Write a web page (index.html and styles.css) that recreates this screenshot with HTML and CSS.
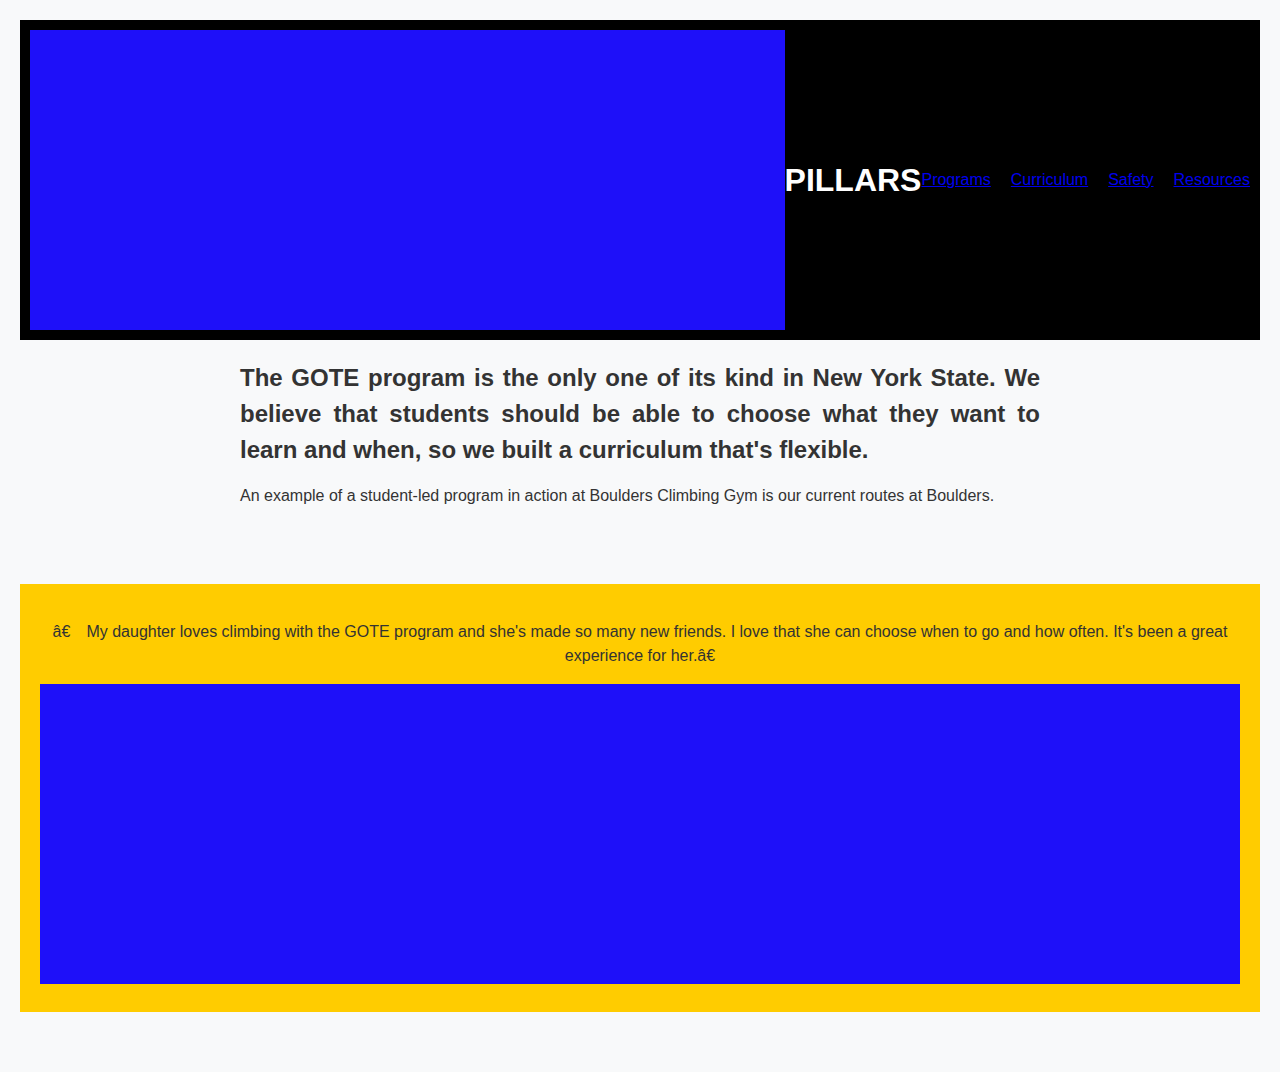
FILE: index.html
```html
<!DOCTYPE html>
<html lang="en">
<head>
<meta charset="utf-8">
<title>PILLARS</title>
<link rel="stylesheet" href="styles.css">
</head>
<body>
<header class="site-header">
  <div class="hero-img"></div>
  <h1 class="logo">PILLARS</h1>
  <nav class="nav">
    <a href="#">Programs</a>
    <a href="#">Curriculum</a>
    <a href="#">Safety</a>
    <a href="#">Resources</a>
  </nav>
</header>
<section class="intro">
  <h2>The GOTE program is the only one of its kind in New York State. We believe that students should be able to choose what they want to learn and when, so we built a curriculum that's flexible.</h2>
  <p>An example of a student-led program in action at Boulders Climbing Gym is our current routes at Boulders.</p>
</section>
<section class="testimonial">
  <p>â€&ensp;&ensp;My daughter loves climbing with the GOTE program and she's made so many new friends. I love that she can choose when to go and how often. It's been a great experience for her.â€</p>
  <div class="photo"></div>
</section>
</body>
</html>
```
FILE: styles.css
```css
html, body {
  margin: 0;
}
body {
  padding: 20px;
  background: #f8f9fa;
  color: #333333;
  font-family: "Liberation Sans", Arial, sans-serif;
  font-size: 16px;
  line-height: 1.5;
}
.site-header {
  display: flex;
  align-items: center;
  background: #000000;
  padding: 10px;
}
.hero-img {
  flex: 1 1 auto;
  height: 300px;
  background: #1e10f9;
}
.logo {
  margin: 0;
  color: #ffffff;
  font-size: 32px;
  font-weight: bold;
  line-height: 1.2;
}
.nav {
  display: flex;
  gap: 20px;
}
.nav a {
  color: #0000ee;
  text-decoration: underline;
}
.intro {
  width: 800px;
  margin: 0 auto 76px;
}
.intro h2 {
  margin: 20px 0 16px;
  font-size: 24px;
  line-height: 36px;
  font-weight: bold;
  text-align: justify;
}
.intro p {
  margin: 0 0 16px;
}
.testimonial {
  background: #ffcc00;
  padding: 20px 20px 28px;
  text-align: center;
}
.testimonial p {
  margin: 16px 0;
}
.photo {
  height: 300px;
  background: #1e10f9;
}
```
